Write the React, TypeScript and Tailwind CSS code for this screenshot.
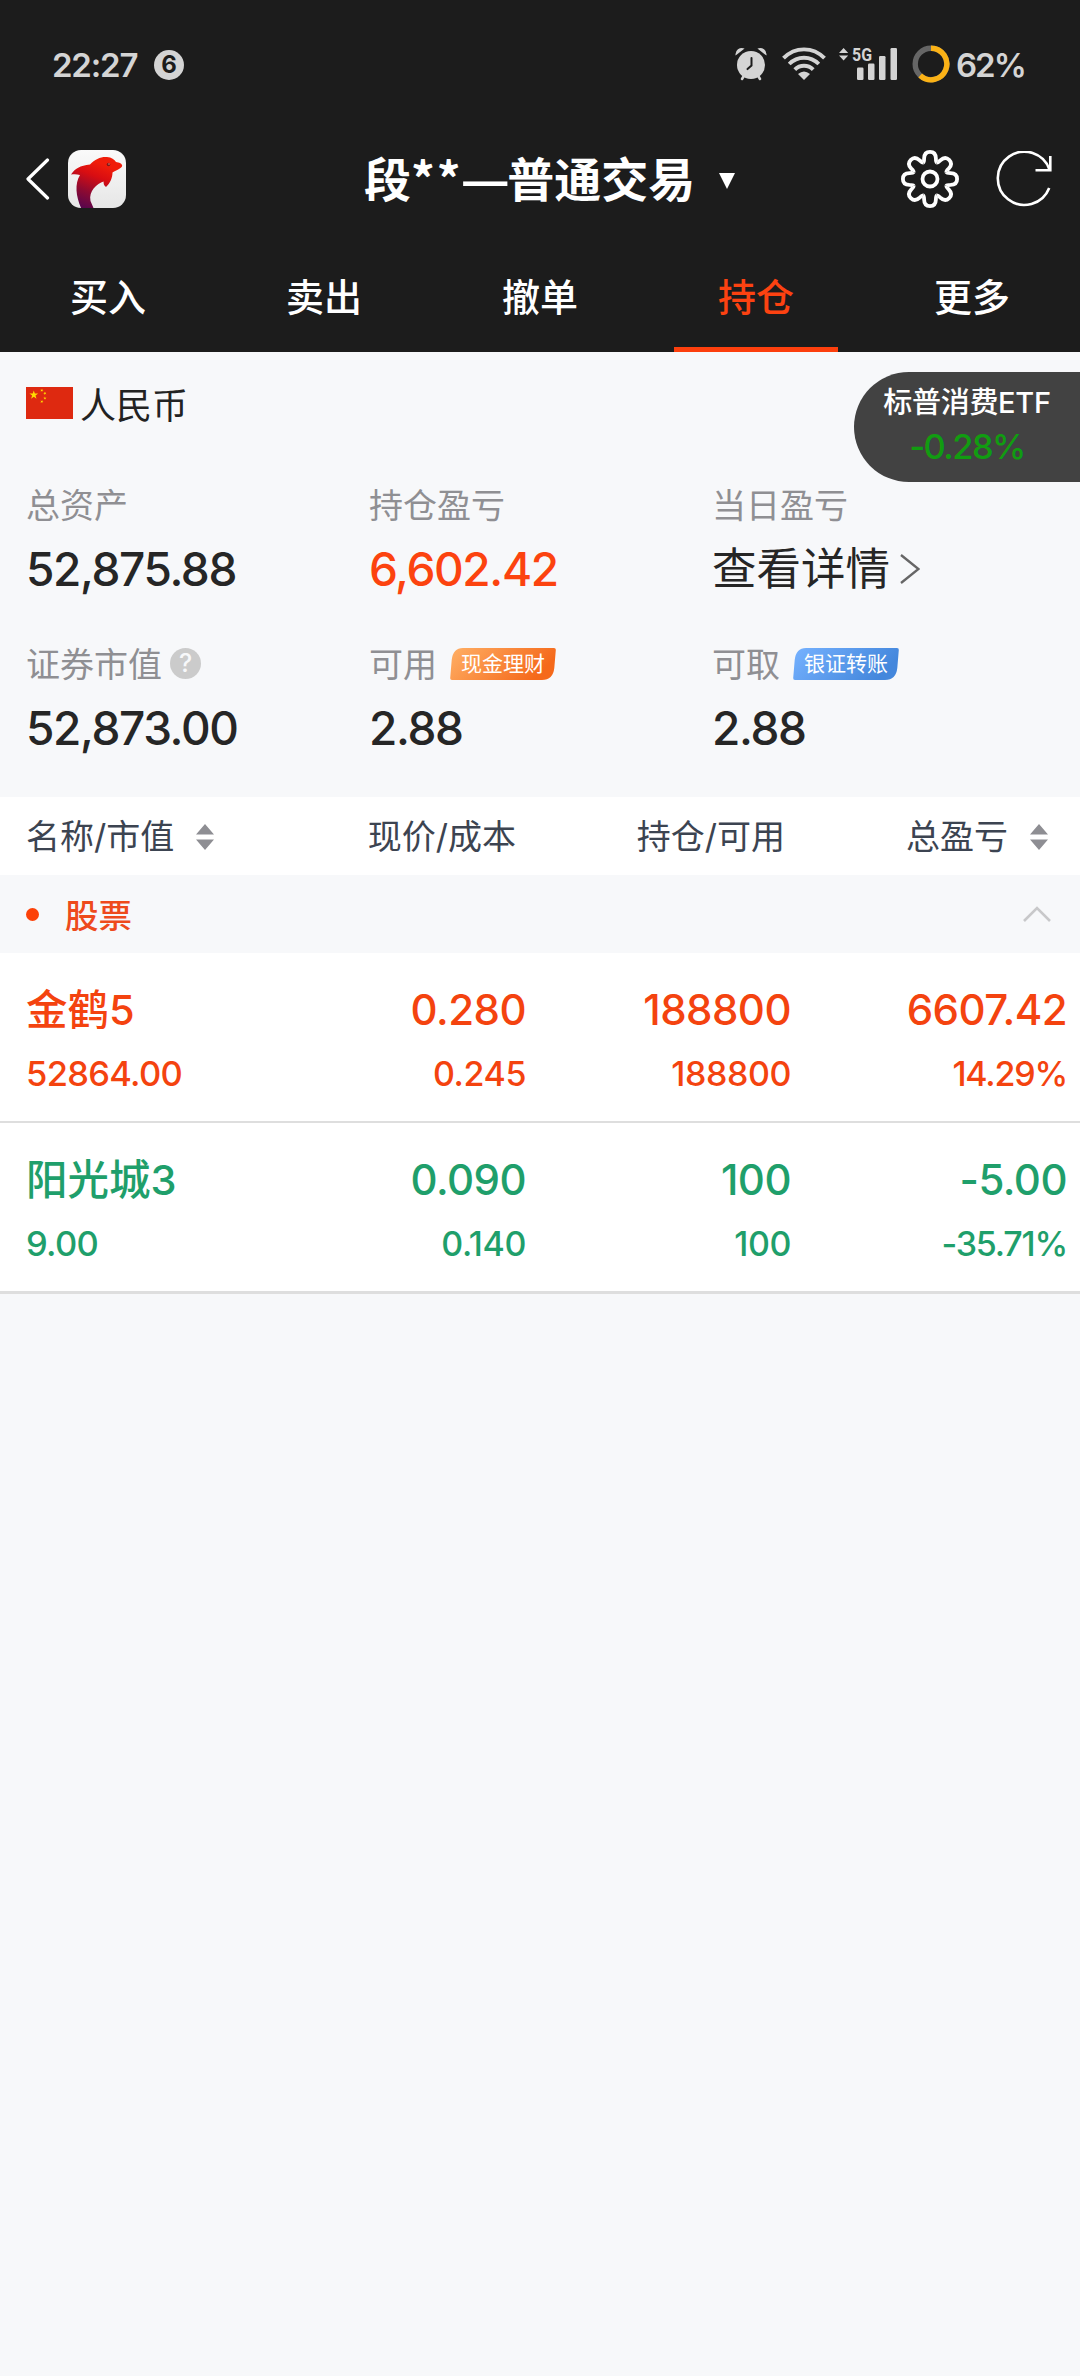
import { clsx } from 'clsx'

type Tone = 'up' | 'down'

type Holding = {
  id: string
  name: string
  marketValue: string
  price: string
  cost: string
  quantity: string
  available: string
  profit: string
  profitRate: string
  tone: Tone
}

const tabs = ['买入', '卖出', '撤单', '持仓', '更多']

const holdings: Holding[] = [
  {
    id: 'jh5',
    name: '金鹤5',
    marketValue: '52864.00',
    price: '0.280',
    cost: '0.245',
    quantity: '188800',
    available: '188800',
    profit: '6607.42',
    profitRate: '14.29%',
    tone: 'up',
  },
  {
    id: 'ygc3',
    name: '阳光城3',
    marketValue: '9.00',
    price: '0.090',
    cost: '0.140',
    quantity: '100',
    available: '100',
    profit: '-5.00',
    profitRate: '-35.71%',
    tone: 'down',
  },
]

function StatusBar() {
  return (
    <div className="flex h-[130px] items-start pl-[52px] pr-[56px] pt-[45px] text-[#d4d4d4]">
      <div className="flex h-10 items-center">
        <span className="w-[102px] text-[33px] leading-10 font-semibold tracking-[-1.2px]">22:27</span>
        <span className="flex size-[30px] items-center justify-center rounded-full bg-[#d4d4d4] text-[24px] leading-[30px] font-bold text-[#1c1c1c]">
          6
        </span>
      </div>
      <div className="ml-auto flex h-[38px] items-center">
        <svg className="h-[34px] w-8" viewBox="0 0 32 34" fill="none">
          <path d="M7 32l3-5M25 32l-3-5" stroke="currentColor" strokeWidth="2.6" strokeLinecap="round" />
          <circle cx="16" cy="18" r="14" fill="currentColor" />
          <path d="M0.6 8.6A6.4 6.4 0 0 1 9.6 1.6ZM31.4 8.6A6.4 6.4 0 0 0 22.4 1.6Z" fill="currentColor" />
          <path d="M16.5 11v7.5l-4 3.6" stroke="#1c1c1c" strokeWidth="2" strokeLinecap="round" />
        </svg>
        <svg className="ml-[15px] h-[34px] w-11" viewBox="0 0 44 34" fill="none" stroke="currentColor" strokeWidth="3.9">
          <path d="M1.5 11.2C13 -0.6 31 -0.6 42.5 11.2" />
          <path d="M7.2 17C15.5 8.6 28.5 8.6 36.8 17" />
          <path d="M12.8 22.6C18 17.4 26 17.4 31.2 22.6" />
          <path d="M16 27Q22 21.8 28 27L22 33Z" fill="currentColor" stroke="none" />
        </svg>
        <div className="relative ml-[13px] h-[34px] w-[59px]">
          <svg className="h-[34px] w-[59px]" viewBox="0 0 59 34" fill="currentColor">
            <path d="M0 6L4.6 1 9.2 6ZM0 8.5L4.6 13.5 9.2 8.5Z" />
            <rect x="18" y="20.5" width="6.5" height="12.5" rx="1.2" />
            <rect x="29" y="16.5" width="6.5" height="16.5" rx="1.2" />
            <rect x="40" y="9" width="6.5" height="24" rx="1.2" />
            <rect x="51.5" y="1" width="6.5" height="32" rx="1.2" />
          </svg>
          <span className="absolute -top-1 left-[13px] origin-left scale-x-[0.86] font-['Roboto',sans-serif] text-[18.5px] leading-6 font-bold">
            5G
          </span>
        </div>
        <svg className="ml-[14px] size-[38px]" viewBox="0 0 38 38" fill="none" strokeWidth="5.4">
          <circle cx="19" cy="19" r="15.8" stroke="#666" />
          <path d="M19 3.2A15.8 15.8 0 1 1 8.2 30.5" stroke="#fbb216" />
        </svg>
        <span className="ml-[6px] w-[68px] pt-0.5 text-[33px] leading-10 font-semibold tracking-[-2px]">62%</span>
      </div>
    </div>
  )
}

function DolphinLogo() {
  return (
    <svg className="size-[58px] rounded-[13px]" viewBox="0 0 58 58">
      <defs>
        <linearGradient id="dolphin" x1="0.7" y1="0" x2="0.3" y2="1">
          <stop offset="0.15" stopColor="#f01d0a" />
          <stop offset="0.4" stopColor="#d80d12" />
          <stop offset="0.72" stopColor="#8d0a31" />
          <stop offset="1" stopColor="#5b064b" />
        </linearGradient>
        <linearGradient id="tile" x1="0" y1="0" x2="0" y2="1">
          <stop offset="0" stopColor="#fafafa" />
          <stop offset="1" stopColor="#e6e6e6" />
        </linearGradient>
      </defs>
      <rect width="58" height="58" fill="url(#tile)" />
      <path
        d="M3 24.5C7 18.5 12 15.5 22 14.5C27 9 33 6.5 39 7C43.5 7.3 46.5 9.5 48 12C51 12.5 54.5 13.5 54.2 16C53 19 49 19.5 44.5 22.5C44.5 28 42 33.5 38 37C35.8 35.5 35.5 33.5 35.6 31.5C29 33.5 20.5 41 22.5 51L25.5 58H13C8 46 6.5 34 12 25C8.5 24 6 24.2 3 24.5Z"
        fill="url(#dolphin)"
      />
      <circle cx="40.5" cy="14.5" r="1.8" fill="#7c1a1a" />
      <circle cx="41" cy="14" r="0.7" fill="#f5a08f" />
    </svg>
  )
}

function GearIcon() {
  const petals = [0, 45, 90, 135, 180, 225, 270, 315]
  return (
    <svg className="size-[58px]" viewBox="-29 -29 58 58" fill="none" stroke="#fff" strokeWidth="3.8">
      {petals.map((angle) => (
        <path
          key={angle}
          transform={`rotate(${angle})`}
          d="M-6.8 -16.4C-6 -16.8 -5.9 -18 -5.9 -20.5C-5.8 -24.9 -3.4 -27.1 0 -27.1C3.4 -27.1 5.8 -24.9 5.9 -20.5C5.9 -18 6 -16.8 6.8 -16.4"
        />
      ))}
      <circle r="7.5" />
    </svg>
  )
}

function NavBar() {
  return (
    <div className="flex h-[98px] items-center pr-[28px] pl-[26px]">
      <svg className="h-[42px] w-6" viewBox="0 0 24 42" fill="none" stroke="#fff" strokeWidth="3.2" strokeLinecap="round" strokeLinejoin="round">
        <path d="M21.5 2L2 21L21.5 40" />
      </svg>
      <div className="ml-[18px]">
        <DolphinLogo />
      </div>
      <div className="ml-[238px] flex w-[371px] items-center justify-between">
        <h1 className="-mt-[4px] font-['Noto_Sans_CJK_SC',sans-serif] text-[47px] leading-[60px] font-bold whitespace-nowrap text-white">
          段<span className="tracking-[2px]">**</span>
          <span className="mx-px inline-block scale-x-[1.16]">—</span>普通交易
        </h1>
        <svg className="mt-1 h-4 w-4 shrink-0" viewBox="0 0 16 16" fill="#fff">
          <path d="M0 0H16L8 16Z" />
        </svg>
      </div>
      <div className="ml-auto flex items-center gap-[37px]">
        <GearIcon />
        <svg className="size-14" viewBox="0 0 56 56" fill="none" stroke="#fff" strokeWidth="2.6">
          <path d="M53.2 37A26.6 26.6 0 1 1 53.6 18.8" />
          <path d="M54.3 5V19.3H39.5" />
        </svg>
      </div>
    </div>
  )
}

function TabBar() {
  return (
    <div className="grid h-[124px] grid-cols-5">
      {tabs.map((tab) => (
        <div key={tab} className="flex flex-col items-center justify-between pt-[45px]">
          <span
            className={clsx(
              'text-[38px] leading-[48px] font-medium',
              tab === '持仓' ? 'text-[#fc4211]' : 'text-white'
            )}
          >
            {tab}
          </span>
          <span className={clsx('h-[5px] w-[164px]', tab === '持仓' && 'bg-[#fc3f0d]')} />
        </div>
      ))}
    </div>
  )
}

function Star({ x, y, r, rotate = 0 }: { x: number; y: number; r: number; rotate?: number }) {
  return (
    <path
      transform={`translate(${x} ${y}) rotate(${rotate}) scale(${r})`}
      d="M0 -1L0.225 -0.309H0.951L0.363 0.118L0.588 0.809L0 0.382L-0.588 0.809L-0.363 0.118L-0.951 -0.309H-0.225Z"
      fill="#ffde00"
    />
  )
}

function Flag() {
  return (
    <svg className="h-8 w-[47px]" viewBox="0 0 47 32">
      <rect width="47" height="32" fill="#de2910" />
      <Star x={7.8} y={8} r={4.6} />
      <Star x={15.8} y={3.4} r={1.7} rotate={24} />
      <Star x={18.9} y={6.4} r={1.7} rotate={46} />
      <Star x={18.9} y={11.2} r={1.7} />
      <Star x={15.8} y={14.6} r={1.7} rotate={20} />
    </svg>
  )
}

function Badge({ id, from, to, children }: { id: string; from: string; to: string; children: React.ReactNode }) {
  return (
    <span className="relative mb-[3px] ml-[13px] flex h-8 w-[106px] items-center justify-center">
      <svg className="absolute inset-0 h-8 w-[106px]" viewBox="0 0 106 32">
        <defs>
          <linearGradient id={id} x1="0" y1="0" x2="1" y2="0.3">
            <stop offset="0" stopColor={from} />
            <stop offset="1" stopColor={to} />
          </linearGradient>
        </defs>
        <path
          d="M13 0H104Q106 0 105.8 2L104.3 20Q103 32 92 32H2Q0 32 0.2 30L1.7 12Q3 0 13 0Z"
          fill={`url(#${id})`}
        />
      </svg>
      <span className="relative text-[21px] leading-8 text-white">{children}</span>
    </span>
  )
}

function Metric({
  label,
  value,
  extra,
  valueClassName,
}: {
  label: string
  value: React.ReactNode
  extra?: React.ReactNode
  valueClassName?: string
}) {
  return (
    <div>
      <div className="flex h-10 items-center text-[34px] leading-10 text-[#8f8f93]">
        <span className="whitespace-nowrap">{label}</span>
        {extra}
      </div>
      <div
        className={clsx(
          'mt-[17px] flex h-[51px] items-center text-[46px] leading-[50px] font-medium tracking-[-0.03em]',
          valueClassName ?? 'text-[#262626]'
        )}
      >
        {value}
      </div>
    </div>
  )
}

function Summary() {
  return (
    <section className="h-[445px] pt-[35px] pl-[26px]">
      <div className="flex h-10 items-start">
        <Flag />
        <span className="ml-[7px] text-[36px] leading-[38px] text-[#222]">人民币</span>
      </div>
      <div className="mt-[59px] grid grid-cols-[343px_343px_343px] gap-y-[51px]">
        <Metric label="总资产" value="52,875.88" />
        <Metric label="持仓盈亏" value="6,602.42" valueClassName="text-[#fc430f]" />
        <Metric
          label="当日盈亏"
          value={
            <>
              <span className="text-[44.5px] font-normal tracking-normal">查看详情</span>
              <svg className="ml-2.5 h-[30px] w-5" viewBox="0 0 20 30" fill="none" stroke="#666" strokeWidth="2.4">
                <path d="M1 1L18.5 15L1 29" />
              </svg>
            </>
          }
        />
        <Metric
          label="证券市值"
          value="52,873.00"
          extra={
            <span className="mb-[3px] ml-2 flex size-[31px] items-center justify-center rounded-full bg-[#cbcbcb] text-[25px] leading-[31px] font-medium text-[#f7f8fa]">
              ?
            </span>
          }
        />
        <Metric
          label="可用"
          value="2.88"
          extra={
            <Badge id="cash" from="#ffb066" to="#f5691a">
              现金理财
            </Badge>
          }
        />
        <Metric
          label="可取"
          value="2.88"
          extra={
            <Badge id="transfer" from="#76b2ff" to="#4487dc">
              银证转账
            </Badge>
          }
        />
      </div>
    </section>
  )
}

function SortIcon() {
  return (
    <svg className="h-[26px] w-[18px]" viewBox="0 0 18 26" fill="#8e8e93">
      <path d="M9 0L18 10.5H0ZM9 26L18 15.5H0Z" />
    </svg>
  )
}

function HoldingRow({ item }: { item: Holding }) {
  const cells = [
    [item.price, item.cost],
    [item.quantity, item.available],
    [item.profit, item.profitRate],
  ]
  return (
    <div
      className={clsx(
        'grid grid-cols-[270px_230px_265px_276px] border-b-2 border-[#dedede] bg-white pt-8 pb-[27px] pl-[26px] font-medium last:border-b-3',
        item.tone === 'up' ? 'text-[#f4430f]' : 'text-[#1f9f6b]'
      )}
    >
      <div>
        <div className="text-[41.5px] leading-[50px]">{item.name}</div>
        <div className="mt-[19px] text-[34.5px] leading-10 tracking-[-0.02em]">{item.marketValue}</div>
      </div>
      {cells.map(([main, sub], index) => (
        <div key={index} className="text-right">
          <div className="text-[42px] leading-[50px] tracking-[-0.013em]">{main}</div>
          <div
            className={clsx(
              'mt-[19px] text-[34px] leading-10',
              sub.endsWith('%') ? 'tracking-[-0.035em]' : 'tracking-[-0.012em]'
            )}
          >
            {sub}
          </div>
        </div>
      ))}
    </div>
  )
}

export default function App() {
  return (
    <div className="relative min-h-[2376px] w-[1080px] overflow-hidden bg-[#f7f8fa] font-['Inter','Noto_Sans_CJK_SC',sans-serif]">
      <header className="bg-[#1c1c1c]">
        <StatusBar />
        <NavBar />
        <TabBar />
      </header>

      <Summary />

      <div className="grid h-[78px] grid-cols-[270px_220px_269px_223px_40px] items-center bg-white pt-px pl-[26px] text-[34px] leading-10 text-[#3c4451]">
        <div className="flex items-center gap-[22px]">
          名称/市值
          <SortIcon />
        </div>
        <div className="text-right">现价/成本</div>
        <div className="text-right">持仓/可用</div>
        <div className="text-right">总盈亏</div>
        <div className="flex justify-end">
          <SortIcon />
        </div>
      </div>

      <div className="flex h-[78px] items-center pr-[29px] pl-[26px]">
        <span className="size-[13px] rounded-full bg-[#fc4108]" />
        <span className="mt-[3px] ml-[26px] text-[33.5px] leading-10 font-medium text-[#ee4a1c]">股票</span>
        <svg className="ml-auto h-4 w-7" viewBox="0 0 28 16" fill="none" stroke="#c8c8ca" strokeWidth="2.6">
          <path d="M1 15L14 2L27 15" />
        </svg>
      </div>

      <div>
        {holdings.map((item) => (
          <HoldingRow key={item.id} item={item} />
        ))}
      </div>

      {/* floating quote, docked to the right edge */}
      <div className="absolute top-[372px] right-0 flex h-[110px] w-[226px] flex-col items-center rounded-l-[55px] bg-[#424242] pt-[11px]">
        <span className="text-[29px] leading-10 font-medium tracking-[-0.3px] text-white">标普消费ETF</span>
        <span className="mt-0.5 text-[34.5px] leading-[44px] font-medium tracking-[-0.045em] text-[#119c11]">-0.28%</span>
      </div>
    </div>
  )
}
